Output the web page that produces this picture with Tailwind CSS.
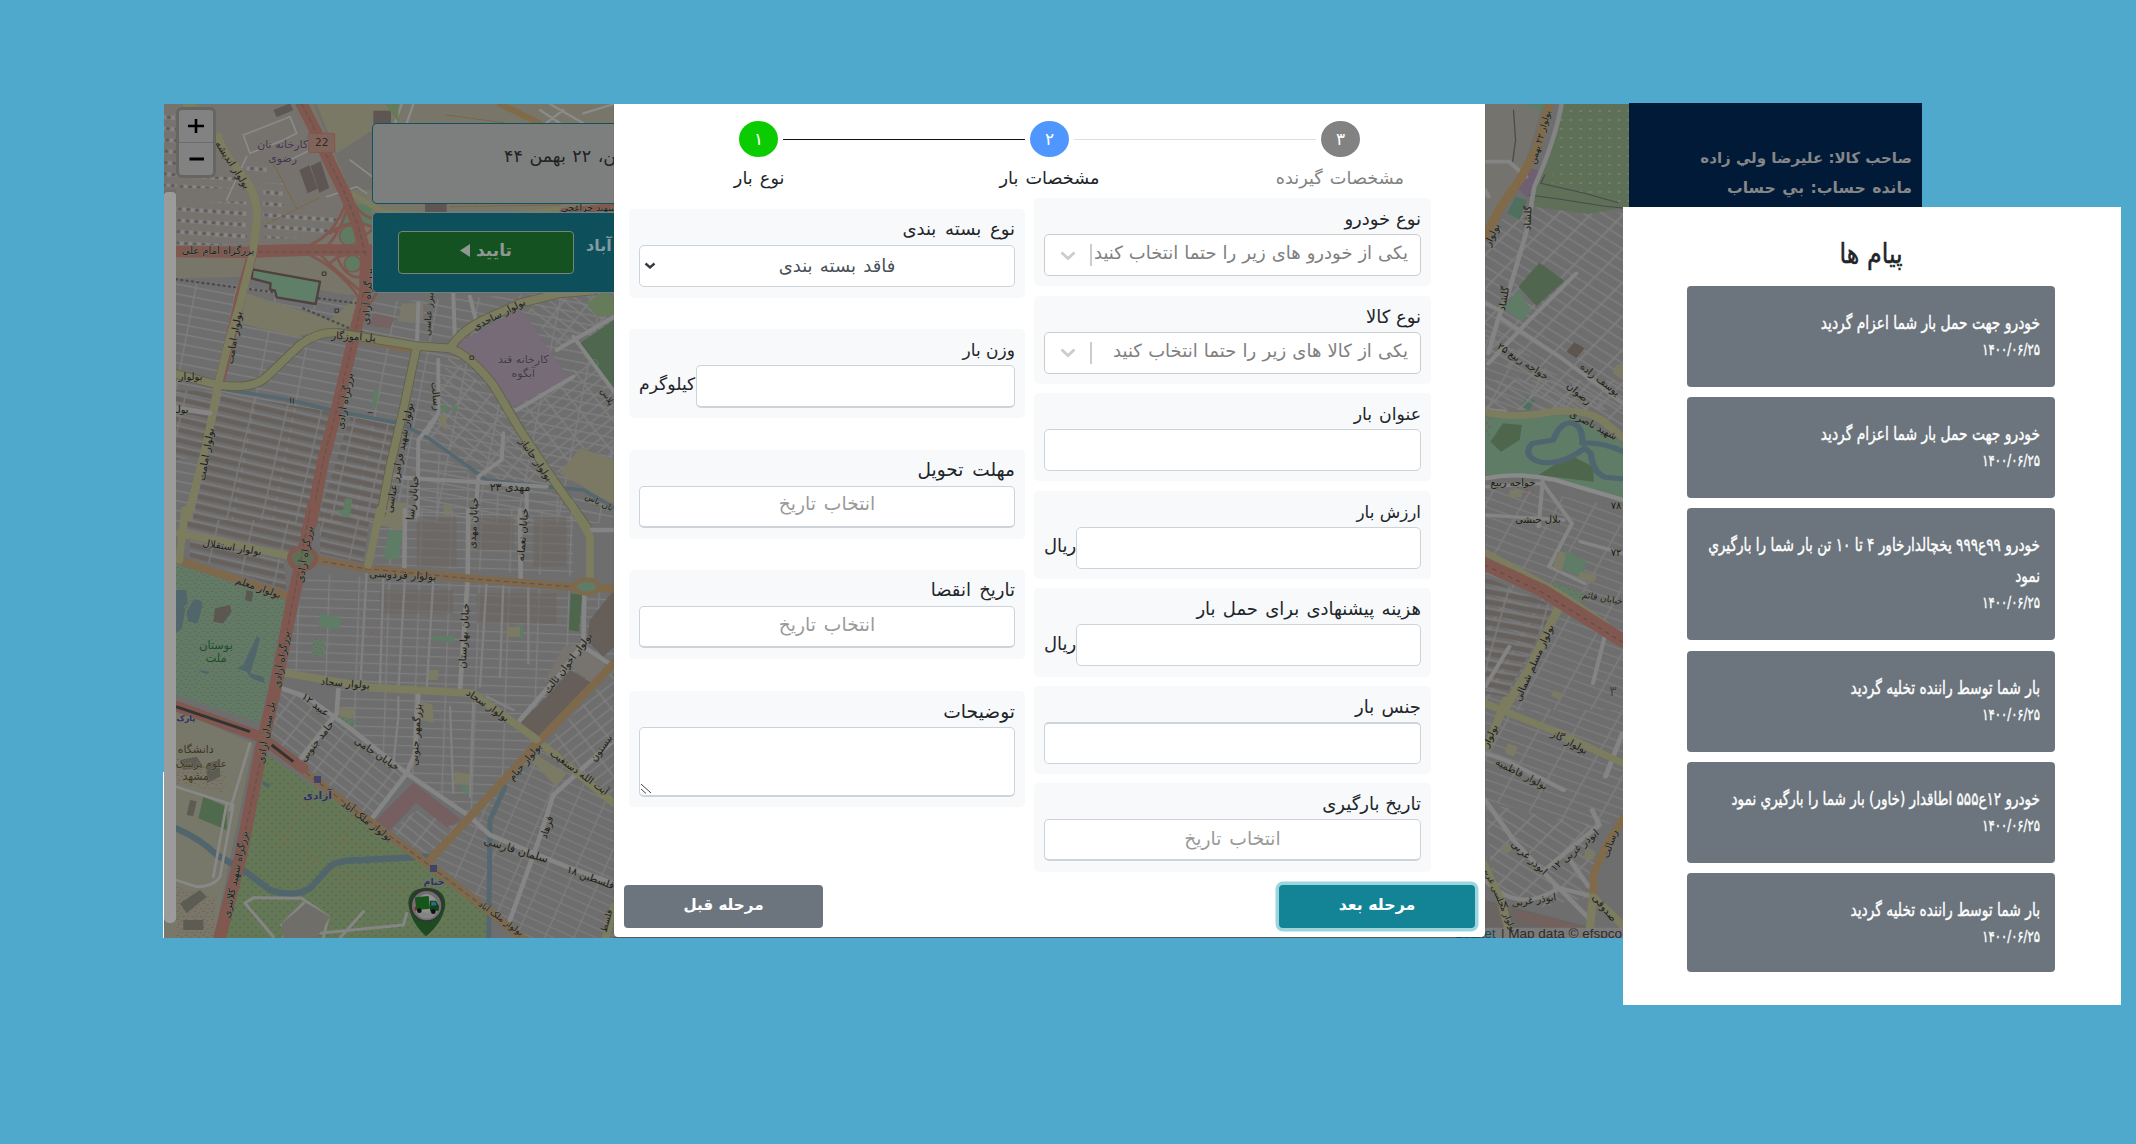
<!DOCTYPE html>
<html lang="fa">
<head>
<meta charset="utf-8">
<title>مشخصات بار</title>
<script src="https://cdn.jsdelivr.net/npm/@tailwindcss/browser@4"></script>
</head>
<body class="bg-[#4fa9cc] font-['DejaVu_Sans',sans-serif]">
<main class="relative w-[2136px] h-[1144px] overflow-hidden pt-[104px] pl-[164px]">

  <!-- application window -->
  <section class="relative flex w-[1758px] h-[834px]">
    <div class="relative w-[1465px] h-[834px] overflow-hidden bg-[#6e6e6e]">
      <svg class="absolute inset-0" width="1465" height="834" viewBox="164 104 1465 834" fill="none" stroke-linecap="round" stroke-linejoin="round">
        <defs>
          <pattern id="streets" width="120" height="29" patternUnits="userSpaceOnUse" patternTransform="rotate(11)"><path d="M0 5H120M8 0V29" stroke="#7e7e7e" stroke-width="4"/></pattern>
          <pattern id="dense" width="102" height="30" patternUnits="userSpaceOnUse" patternTransform="rotate(13)"><path d="M0 15H102" stroke="#67615e" stroke-width="15" stroke-dasharray="7 2"/><path d="M0 3H102M4 0V30" stroke="#7b7b7b" stroke-width="4"/></pattern>
          <pattern id="blocks" width="90" height="27" patternUnits="userSpaceOnUse" patternTransform="rotate(2)"><path d="M0 5H90M5 0V27" stroke="#7e7e7e" stroke-width="4"/></pattern>
          <pattern id="diag" width="62" height="27" patternUnits="userSpaceOnUse" patternTransform="rotate(38)"><path d="M0 4H62M4 0V27" stroke="#7e7e7e" stroke-width="4.500"/></pattern>
          <pattern id="diag2" width="60" height="28" patternUnits="userSpaceOnUse" patternTransform="rotate(-38)"><path d="M0 4H60M4 0V28" stroke="#7e7e7e" stroke-width="4.500"/></pattern>
          <pattern id="slope" width="80" height="26" patternUnits="userSpaceOnUse" patternTransform="rotate(24)"><path d="M0 4H80M4 0V26" stroke="#7c7c7c" stroke-width="4"/></pattern>
          <pattern id="trees" width="24" height="24" patternUnits="userSpaceOnUse"><path d="M4 5h3M16 17h3" stroke="#425c3d" stroke-width="2"/></pattern>
          <pattern id="flowers" width="26" height="24" patternUnits="userSpaceOnUse"><path d="M3 4h4M15 9h3M8 18h3M21 20h3" stroke="#7d5650" stroke-width="3"/></pattern>
          <pattern id="dots" width="23" height="27" patternUnits="userSpaceOnUse"><path d="M9 9h3" stroke="#7c8570" stroke-width="4"/></pattern>
          <pattern id="houses" width="52" height="34" patternUnits="userSpaceOnUse" patternTransform="rotate(4)"><path d="M0 10H52" stroke="#868686" stroke-width="12"/><path d="M4 10h12M30 10h12" stroke="#5f5c5a" stroke-width="10" stroke-linecap="butt"/></pattern>
        </defs>

        <!-- north west -->
        <g transform="translate(150 90) scale(.33333)">
          <path fill="url(#streets)" d="M78 560L620 640 1392 600V1300H78z"/>
          <path fill="url(#dense)" d="M190 905L540 965 480 1300H110zM600 980L750 1010 700 1300H500zM78 900L190 905 150 1100 78 1110z"/>
          <path fill="url(#blocks)" d="M830 1060L1000 1180 1200 1200 1290 1300H700z"/>
          <path fill="url(#diag)" d="M900 790L1020 910 1110 1020 1210 1190 1120 1190 1000 1160 820 1040zM1130 660L1392 560V700L1280 750 1230 780z"/>
          <path fill="url(#diag2)" d="M1100 955L1260 860 1310 790 1392 900V1100L1290 1075 1230 1150 1190 1140z"/>
          <path fill="#787569" d="M42 42H1392V380H700L660 620 560 610 300 560 78 565V300H42z"/>
          <path fill="#76736e" d="M42 42H450L590 300 600 370 480 470H78V300H42z"/>
          <path fill="#716f6b" d="M490 42H700V300H600z"/>
          <path fill="#797965" d="M500 42H750L700 100 560 190zM290 610L540 690 620 620 600 710 520 720 440 740 270 700z"/>
          <path fill="url(#houses)" d="M80 335H290V465H80zM340 280H400V410H340zM345 375H570V445H345zM90 260H300V295H90zM42 60H80V290H42zM290 225H350V260H290z"/>
          <path fill="#5d5652" d="M670 62h53v40h-53zM448 240l30-14 25 70-30 14zM482 228l30-14 26 80-30 14zM370 60l50-20 10 20-50 22zM825 340h65v28h-65z"/>
          <path d="M280 135L420 80 440 130 400 150 300 190zM420 210L500 170M230 330L290 200M530 320L620 290 650 310M600 210L640 240 720 300" stroke="#8a8a8a" stroke-width="5"/>
          <path d="M370 220L440 355M350 402L505 325M890 75L1060 98M900 350L1230 345" stroke="#7a6540" stroke-width="3" stroke-dasharray="14 4"/>
          <path d="M755 42L735 100M790 42L770 100M1170 60L1230 100M1200 42L1300 100M1392 42L1300 70M1240 60L1190 98" stroke="#8b8b8b" stroke-width="7"/>
          <path fill="#657b5a" d="M705 42h40v55zM1310 640l50-35 32 20v50l-50 5z"/>
          <path fill="#4e674e" d="M1282 765L1392 690V905z"/><circle cx="1333" cy="820" r="11" stroke="#60805f" stroke-width="3"/>
          <path d="M78 568L620 640" stroke="#4b4b4b" stroke-width="7" stroke-dasharray="3 13"/>
          <path d="M460 655L610 720" stroke="#4b4b4b" stroke-width="7" stroke-dasharray="3 13"/>
          <path fill="#5f7f68" stroke="#51403f" stroke-width="7" d="M308 538L510 575 497 642 380 622 375 602 360 598 362 580 305 565z"/>
          <path fill="#766b77" d="M920 765L1110 655 1255 862 1092 950 1030 870z"/>
          <path fill="#756263" d="M670 670l65 15-15 30-60-8z"/><path fill="#7a786a" d="M755 640h65v60l-75-5z"/>
          <path fill="#7b7864" d="M1228 1150L1290 1075 1392 1110V1250L1300 1190z"/>
          <path fill="#5f7c63" d="M672 898l15 2-8 55-15-4zM872 945h20v20h-20zM905 947h18v18h-18zM585 1225l22 2-8 55-22-5zM590 360l20 30-36 25zM610 340L665 345V410L620 400z"/>
          <path fill="#7b7a66" d="M710 1230l60 10-5 50h-60zM880 1245h25v40h-25zM870 975h20v50l-25-30z"/>
          <path d="M210 895L420 930 540 960 750 1000 830 1040 900 1090 1010 1170 1190 1190 1300 1200 1392 1252" stroke="#55676f" stroke-width="11"/>
          <path d="M865 810L865 970 805 1050 803 1290M865 970L830 1030M910 610L915 760M960 620L980 700M1060 1030L1055 1110 985 1160 975 1290M720 1160L1190 1190M800 790L805 640M1130 1200V1290M1220 780L1392 680M1270 740L1392 905M1392 440V560M1100 960L1270 860" stroke="#858585" stroke-width="12"/>
          <path d="M600 310L700 365 950 385 1392 345" stroke="#7c7d5e" stroke-width="16"/>
          <path d="M1392 350L1240 365" stroke="#80584f" stroke-width="22"/>
          <path d="M1050 42L1170 100" stroke="#806a48" stroke-width="18"/>
          <path d="M625 740L800 775" stroke="#806a4f" stroke-width="34"/>
          <path d="M300 470L480 465Q560 430 590 330M480 495Q570 540 625 620M500 480Q530 520 640 610M530 470Q570 430 600 330M540 430Q600 380 665 410M540 520Q590 470 640 520M560 500Q590 570 635 560M665 420Q600 470 665 500M610 340Q640 380 665 385M680 610L640 670" stroke="#80584f" stroke-width="8"/>
          <circle cx="597" cy="437" r="29" fill="#5f7c63" stroke="#80584f" stroke-width="5"/><circle cx="608" cy="521" r="25" fill="#5f7c63" stroke="#80584f" stroke-width="5"/>
          <path d="M455 42L500 130 540 220 585 310 625 410 648 500 645 610 622 700 600 790 560 960 520 1110 483 1300" stroke="#80584f" stroke-width="36"/>
          <path d="M78 485L300 487 480 480 665 480" stroke="#80584f" stroke-width="34"/>
          <path d="M455 42L500 130 540 220 585 310 625 410 648 500M640 610L622 700 600 790 560 960 520 1110 483 1300M325 486H660" stroke="#675250" stroke-width="4" stroke-dasharray="12 12"/>
          <path d="M210 870Q240 760 270 620L310 480" stroke="#80584f" stroke-width="30"/>
          <path stroke="#5f6047" stroke-width="28" d="M78 852L205 885Q310 900 350 860L450 765Q500 725 560 728L800 768 900 775Q960 795 1030 885L1110 1020 1210 1170 1310 1310M800 770L760 960 720 1130 688 1300M900 775Q930 725 1000 690L1110 640 1230 610 1330 602"/>
          <path stroke="#7c7d5e" stroke-width="23" d="M78 852L205 885Q310 900 350 860L450 765Q500 725 560 728L800 768 900 775Q960 795 1030 885L1110 1020 1210 1170 1310 1310M800 770L760 960 720 1130 688 1300M900 775Q930 725 1000 690L1110 640 1230 610 1330 602M205 140Q220 190 250 220L300 290Q330 350 317 420L308 490 270 640 235 760 205 880 170 1060 108 1300M110 42L150 62"/>
          <path d="M78 955L180 970" stroke="#858585" stroke-width="15"/>
          <rect x="476" y="130" width="78" height="57" rx="4" fill="#7e655c" stroke="#8a5349" stroke-width="3"/>
          <path d="M422 924v14M430 926v14M655 968h12M518 546h10v10h-10zM556 657h10v10h-10zM961 798h10v10h-10z" stroke="#333" stroke-width="3"/>
        </g>

        <!-- south west -->
        <g transform="translate(150 510) scale(.33333)">
          <path fill="url(#blocks)" d="M470 190L1392 250V460L1170 690 960 540 660 530 400 480zM560 530L960 560 1160 700 960 920 600 660z"/>
          <path fill="url(#dense)" d="M110 30H480L430 130 110 70zM120 90L400 150 410 240 120 140zM510 20H660L640 160 510 130z"/>
          <path fill="url(#blocks)" d="M690 0H1270V200L640 160z"/>
          <path fill="#6b6561" opacity=".55" d="M800 20h120v150H800zM980 20h110v100h-110zM1150 20h100v150h-100zM690 240h220v70H690zM980 250h240v90H980z"/>
          <path fill="url(#diag)" d="M380 540L470 560 770 790 650 930 360 690zM720 960L830 880 930 950 830 1040z"/>
          <path fill="url(#slope)" d="M1080 800L1170 710 1392 890V1290H1140L850 1050 960 930z"/>
          <path fill="url(#diag2)" d="M1190 700L1392 480V860z"/>
          <path fill="#5f7c67" d="M78 160L410 272 330 640 78 555z"/><path fill="url(#flowers)" d="M78 160L410 272 330 640 78 555z"/>
          <path fill="#78786a" d="M78 600L310 700 270 900 190 1290H42V1240L78 1220z"/>
          <path fill="url(#flowers)" d="M78 740L230 790 220 850 78 820zM78 1130L200 1160 190 1284H78z"/>
          <path fill="#5d5c52" d="M90 750l50-10 20 30-60 10zM170 760l40-10v50l-40 20zM90 1180l60-40 20 20-60 50zM100 1230h60v30h-60zM120 870l20 4-10 45-20-4z"/>
          <path fill="#4f6a4c" d="M160 860L230 890V960L145 925z"/>
          <path fill="#647757" d="M345 730L830 1060 1010 1200 1015 1290H225L300 960z"/><path fill="url(#trees)" d="M345 730L830 1060 1010 1200 1015 1290H225L300 960z"/>
          <path d="M400 800L560 990 760 1040M330 930L700 1200M560 990L420 1120M500 860L460 900 360 1040M620 910L540 1080 800 1150" stroke="#7c6c45" stroke-width="3" stroke-dasharray="20 9"/>
          <path fill="#50666b" d="M78 240h30l5 40-20 20-15-5zM130 270q25-5 28 15l-15 55-28-5-5-30zM78 290l28 5-10 60-18 15zM320 380l10 5-15 60-15 45 40 10 5 20-40-15-15-20-30-10 20-10zM140 480l40 5-10 8zM340 812l22 12-8 10-18-12z"/>
          <path fill="#5d5752" d="M195 295l45-10 5 20-25 35-30-5zM290 240l20 5-5 30-20-4z"/>
          <path fill="#5f7c67" d="M715 60L760 65 745 150 702 145zM490 385l38 8-8 50-35-8zM560 610l55 20-10 40-45-30zM510 310l65 14-10 35-60-10zM850 378h65l-4 20-65-7zM1100 345h20v40h-20zM930 830l30-5-5 25-20-5zM555 0h50l-20 20z"/>
          <path fill="url(#flowers)" d="M490 385l38 8-8 50-35-8zM560 610l55 20-10 40-45-30zM655 365h50v15h-50z"/>
          <path fill="#4e674c" d="M1262 250l35 5-10 110-30-5z"/>
          <path fill="#7b7a64" d="M715 0h55l-15 60-65-15zM570 590l45 8-8 30-40-10zM830 480h35v30h-35zM812 575l35 8 5 55-40-8zM1140 750L1160 735 1250 790 1220 830zM915 785l45 8-4 32-44-6zM1070 350h40v30h-40z"/>
          <path fill="#655e59" d="M1110 640L1200 550 1260 480 1335 525 1170 685zM1320 330L1392 240V410L1360 440 1310 390z"/>
          <path fill="#77736e" d="M1180 520L1240 410 1300 400 1370 470 1330 520 1260 470z"/>
          <path fill="#755f61" d="M678 930L790 818 935 930 890 952 798 878 716 965z"/>
          <path d="M1065 830L1020 930 1016 1290" stroke="#55676f" stroke-width="15"/>
          <path d="M78 955Q150 985 200 1035L280 1080 360 1140Q430 1165 480 1135L540 1070Q560 1050 640 1050L830 1040" stroke="#51656c" stroke-width="19"/>
          <path d="M78 830L250 885 210 1100Q190 1130 140 1130L78 1110M230 880L190 1100M300 700L240 900" stroke="#888" stroke-width="8"/>
          <path d="M285 1180L310 1163 455 1165 535 1220 520 1284M285 1180L370 1280M395 1245L460 1180M640 1205L570 1284M400 1280L760 1245 770 1210" stroke="#858585" stroke-width="9"/>
          <path fill="#706e68" d="M470 1180L540 1220 500 1284H400L395 1240z"/>
          <path d="M380 530L470 560 600 655 770 790 960 920 1020 975 1250 1070 1392 1120M1303 250L1300 400 1240 480 1110 630M670 920L770 790 795 730 805 550M955 0L953 210 930 540M765 0L763 180M1110 0L1112 220M565 540L560 610 450 750M1392 690L1210 855 1170 980 1080 1230M1320 60H1392M1300 410L1392 470" stroke="#858585" stroke-width="14"/>
          <path d="M650 190L630 540M745 560V620L730 760M1010 560L1090 600M765 200L745 540M700 200L690 520M850 210L830 540M1010 215L990 530M1060 220L1050 500M900 590L910 850M970 570L960 860M1135 230V460" stroke="#808080" stroke-width="7"/>
          <path stroke-width="24" stroke="#7f694c" d="M78 148L410 258M500 148L640 175 950 205 1260 230 1392 236M355 690L470 790 600 890 830 1060 1000 1190 1130 1295M835 1055L960 920 1080 790 1170 690 1392 460"/>
          <path d="M520 155L640 175 950 205 1260 230M470 790L600 890 830 1060 1000 1190" stroke="#5d5658" stroke-width="4" stroke-dasharray="12 14"/>
          <path stroke="#7c7d5e" stroke-width="23" d="M105 0L88 150M88 70L430 140M655 165L690 0M410 490L660 532 970 550 1160 688M1185 710L1392 880M1262 -20L1320 80V200M1365 1290L1392 1190"/>
          <path d="M490 -10L458 140 430 260 375 540 335 710 272 1040 205 1300" stroke="#80584f" stroke-width="38"/>
          <path d="M78 588L330 680 460 775" stroke="#80584f" stroke-width="32"/><path d="M78 590L300 665M365 705L430 755" stroke="#333" stroke-width="9" stroke-linecap="butt"/>
          <ellipse cx="458" cy="145" rx="40" ry="32" fill="#5f6f55" stroke="#80584f" stroke-width="14"/>
          <path d="M480 0L435 240 385 500M330 760L260 1080" stroke="#675250" stroke-width="4" stroke-dasharray="12 12"/>
          <ellipse cx="1310" cy="230" rx="36" ry="21" fill="#5f7c67" stroke="#7f694c" stroke-width="13"/>
          <path fill="#41436b" d="M492 798h21v21h-21zM840 1065h21v21h-21z"/>
        </g>

        <!-- map labels, west -->
        <g transform="translate(150 90) scale(.33333)" font-family="DejaVu Sans" font-size="30" text-anchor="middle" fill="#1d1d1d" stroke="#77776a" stroke-width="3" paint-order="stroke">
          <g fill="#47334a" stroke="#777" font-size="33"><text x="398" y="174">کارخانه نان</text><text x="398" y="216">رضوی</text><text x="1120" y="820">کارخانه قند</text><text x="1120" y="861">آبگوه</text></g>
          <text x="515" y="168" font-size="32" fill="#3b2420" stroke="none">22</text>
          <text x="204" y="492">بزرگراه امام علی</text>
          <text transform="translate(240 230) rotate(57)">بولوار اندیشه</text>
          <text transform="translate(262 745) rotate(-80)">بولوار امامت</text>
          <text transform="translate(178 1095) rotate(-80)">بولوار امامت</text>
          <text transform="translate(662 620) rotate(-86)">بزرگراه آزادی</text>
          <text transform="translate(594 935) rotate(-80)">بزرگراه آزادی</text>
          <text x="610" y="750" transform="rotate(3 610 750)">پل آموزگار</text>
          <text transform="translate(1052 682) rotate(-27)">بولوار ساجدی</text>
          <text transform="translate(845 670) rotate(-86)" font-size="27">میرز عباسی</text>
          <text transform="translate(848 920) rotate(84)">رسالت</text>
          <text transform="translate(758 1105) rotate(-79)">بولوار شهید فرامرز عباسی</text>
          <text transform="translate(1150 1115) rotate(55)">بولوار جانباز</text>
          <text x="1080" y="1204" font-size="33">مهدی ۲۳</text>
          <text transform="translate(798 1225) rotate(-83)">خیابان رسا</text>
          <text x="122" y="870">بولوار</text><text x="95" y="970">بولـ</text>
          <text transform="translate(1365 925) rotate(60)" font-size="26">پلاس</text><text transform="translate(1344 1244) rotate(25)" font-size="26">بان یاس</text><text x="1315" y="363" font-size="28">شهید چراغچی</text>
        </g>
        <g transform="translate(150 510) scale(.33333)" font-family="DejaVu Sans" font-size="30" text-anchor="middle" fill="#1d1d1d" stroke="#77776a" stroke-width="3" paint-order="stroke">
          <text transform="translate(245 122) rotate(9)">بولوار استقلال</text>
          <text transform="translate(322 242) rotate(19)">بولوار معلم</text>
          <text transform="translate(474 135) rotate(-80)">بزرگراه آزادی</text>
          <text transform="translate(404 450) rotate(-80)">بزرگراه آزادی</text>
          <text transform="translate(358 670) rotate(-80)">پل میدان آزادی</text>
          <text transform="translate(266 1095) rotate(-78)">بزرگراه شهید کلانتری</text>
          <text transform="translate(758 206) rotate(3)" font-size="32">بولوار فردوسی</text>
          <text transform="translate(585 530) rotate(5)">بولوار سجاد</text>
          <text transform="translate(1008 595) rotate(34)">بولوار سجاد</text>
          <text transform="translate(952 378) rotate(-87)">خیابان بهارستان</text>
          <text transform="translate(980 40) rotate(-87)">خیابان مهدی</text><text transform="translate(1128 75) rotate(-85)">خیابان نعمانه</text>
          <text transform="translate(808 675) rotate(-86)">بزرگمهر جنوبی</text>
          <text transform="translate(675 740) rotate(34)">خیابان جامی</text>
          <text transform="translate(490 592) rotate(38)">عبید ۱۲</text>
          <text transform="translate(508 700) rotate(-52)">حامد جنوبی</text>
          <text transform="translate(645 940) rotate(37)">بولوار ملک آباد</text>
          <text transform="translate(1048 1232) rotate(36)" font-size="26">بولوار ملک آباد</text>
          <text transform="translate(1132 762) rotate(-50)">بولوار خیام</text>
          <text transform="translate(1262 465) rotate(-53)">بولوار اخوان ثالث</text>
          <text transform="translate(1282 795) rotate(36)">آیت الله دستغیب</text>
          <text transform="translate(1095 1030) rotate(17)" font-size="33">سلمان فارسی</text>
          <text transform="translate(1318 1112) rotate(20)">فلسطین ۱۸</text>
          <text transform="translate(1200 955) rotate(-72)">فرهاد</text><text transform="translate(1362 720) rotate(-55)">بیستون</text>
          <text transform="translate(1378 1235) rotate(-75)" font-size="26">فلسط</text>
          <g fill="#1f4a26" stroke="#5f7c67" font-size="34"><text x="198" y="418">بوستان</text><text x="198" y="455">ملت</text></g>
          <g fill="#3d3722" stroke="#78786a" font-size="33"><text x="137" y="730">دانشگاه</text><text x="154" y="770" font-size="31">علوم پزشک</text><text x="137" y="810">مشهد</text></g>
          <g fill="#2c2f66" font-size="32" font-weight="bold"><text x="108" y="634" font-size="24">پارک</text><text x="503" y="868">آزادی</text><text x="852" y="1126" font-size="28">خیام</text></g>
          <!-- truck pin -->
          <g stroke="none">
            <path fill="#1d4a20" d="M775 1180Q775 1135 830 1133 886 1135 886 1185 880 1235 828 1279 780 1235 775 1180z"/>
            <circle cx="830" cy="1185" r="50" fill="#333"/><circle cx="830" cy="1187" r="44" fill="#6f6f6f"/><circle cx="830" cy="1190" r="36" fill="#858585"/><circle cx="830" cy="1180" r="28" fill="#909090"/>
            <path fill="#15561a" d="M795 1162L836 1158 840 1196 798 1200z"/><path fill="#124316" d="M840 1172L858 1172 867 1188 866 1202 840 1204z"/><path fill="#2d6c8d" d="M844 1175L856 1175 860 1186 844 1187z"/>
            <path fill="#8a2a20" d="M794 1190h5v12h-5z"/><circle cx="808" cy="1202" r="7" fill="#111"/><circle cx="850" cy="1205" r="7" fill="#111"/>
          </g>
        </g>

        <!-- east strip -->
        <g transform="translate(1480 90) scale(.41837 .33333)">
          <path fill="#6e6e6e" d="M12 42H356V960H12z"/><path fill="url(#diag)" d="M100 340L356 370V960H180L12 780V430z"/><path fill="url(#slope)" d="M12 700L190 860 342 960H12z"/>
          <path fill="#75736d" d="M12 42H150L100 250 12 430z"/>
          <path fill="#5f7058" d="M190 42H356V350L260 372 130 350 125 290 165 200z"/><path fill="url(#dots)" d="M195 50H356V350L170 280z"/>
          <path fill="#5f7c67" d="M105 42h45v25z"/><path fill="#50705f" d="M85 320L112 330 95 390 65 370z"/><path fill="#6e6070" d="M110 235L140 240 115 325 85 290z"/>
          <path d="M80 60L85 150 78 215M155 255L145 280 250 310 330 338M118 315L192 328 295 348 356 356" stroke="#4a4a4a" stroke-width="3"/>
          <path d="M12 215L70 215 110 260M20 320L12 300M195 42Q180 150 130 290L110 430 70 600 45 680 20 790M230 550L110 700M45 680L190 800 342 940M45 660L12 640M110 700L20 820" stroke="#848484" stroke-width="11"/>
          <path fill="#50664f" d="M142 518L202 572 135 648 92 590z"/><path fill="#5f7c67" d="M95 600L120 660 100 695 55 655z"/><path fill="#5d5550" d="M225 757L250 775 230 805 207 785z"/><path fill="#7b7a64" d="M325 825L342 820V870L318 850z"/><path fill="#50705f" d="M110 920l22 12-15 30-20-10z"/>
          <path d="M166 42L135 180 95 270 50 350 8 450" stroke="#806a48" stroke-width="22" stroke-linecap="butt"/>
          <path stroke="#848484" stroke-width="12" d="M12 960L60 965"/>
        </g>
        <g transform="translate(1480 380) scale(.41837 .33333)">
          <path fill="url(#diag)" d="M12 0H342V180L290 120 230 90 12 90z"/><path fill="url(#slope)" d="M12 310L342 380V990H12z"/>
          <path fill="url(#dense)" d="M12 590L180 680 60 950 12 940z"/>
          <path fill="#5f7c67" d="M12 110L230 105 342 190V370L200 305 12 285z"/><path fill="url(#flowers)" d="M12 115h15v50H12z"/><path fill="#4e674c" d="M55 130L100 135 95 180 50 215 25 185zM215 225L270 260 272 305 140 285z"/>
          <path d="M12 295Q90 275 180 300L342 360" stroke="#8a8a8a" stroke-width="13"/>
          <path d="M342 297L300 292Q270 280 265 220L250 205Q190 260 140 245 100 225 125 190L175 180Q190 130 215 128 245 130 245 190 290 185 342 215" stroke="#4f6570" stroke-width="15"/>
          <path d="M12 320L150 310 220 430 165 560 250 610M12 405L200 420M240 485L342 520M150 300L140 440M300 760L270 910M12 920L70 800" stroke="#848484" stroke-width="10"/>
          <path fill="#5f7c67" d="M205 510L255 545 245 590 200 570zM170 605L250 640 240 670 200 665z"/><path fill="#7b7a64" d="M185 515L205 525 195 575 175 560zM70 330h30v22H70zM175 930l25 12-8 18-22-12zM240 575l40 10-8 22-38-10z"/><path fill="url(#flowers)" d="M170 605L250 640 240 670 200 665zM105 320h25v32h-25z"/>
          <path d="M8 95Q80 115 150 100 240 80 290 120L345 175M8 515L190 640 300 735M185 690L120 860 58 990M8 968L58 995" stroke="#7c7d5e" stroke-width="21"/>
          <path d="M5 548L150 632 345 785" stroke="#80584f" stroke-width="38"/><path d="M12 555L150 638 342 788" stroke="#5f4a47" stroke-width="3" stroke-dasharray="8 14"/>
        </g>
        <g transform="translate(1480 700) scale(.41837 .33333)">
          <path fill="#6e6e6e" d="M12 30H342V714H12z"/><path fill="url(#slope)" d="M12 30H342V350L280 390 12 300z"/><path fill="url(#diag)" d="M12 310L280 380 268 590 150 620 30 560z"/>
          <path fill="#6a6562" d="M12 600L260 680V714H12z"/><path fill="#73615e" d="M90 630L250 680 240 705 90 660z"/>
          <path fill="#7b7a64" d="M65 130L90 140 80 170 60 160zM60 430L78 445 65 462 50 450zM250 450h22v28h-22z"/>
          <path d="M12 160L60 180 200 270M12 300L80 420 150 515 260 655M150 515L285 375M285 375L268 330M12 540Q90 640 180 570M340 100L300 230M215 480L260 560M180 560L268 590" stroke="#848484" stroke-width="12"/>
          <path d="M345 350L300 440 272 520 270 595" stroke="#806a48" stroke-width="18"/>
          <path d="M8 8L190 100 345 192M62 0L18 140M8 490L50 600 75 720M270 590L260 720M270 590L345 680" stroke="#7c7d5e" stroke-width="20"/>
          <path fill="#7e7e7e" fill-opacity=".85" d="M-80 683H356V720H-80z"/>
        </g>
        <g font-family="DejaVu Sans" font-size="10" text-anchor="middle" fill="#1d1d1d" stroke="#77776a" stroke-width="1" paint-order="stroke">
          <text transform="translate(1543 138) rotate(-74)" font-size="9">بولوار ۲۲ بهمن</text><text transform="translate(1495 236) rotate(-65)">بولوار</text><text transform="translate(1531 218) rotate(-88)">گلشاد</text><text transform="translate(1507 299) rotate(-80)">گلشاد</text>
          <text transform="translate(1521 364) rotate(33)">خواجه ربیع ۲۵</text><text transform="translate(1577 396) rotate(40)">رضوان</text><text transform="translate(1598 382) rotate(38)">یوسف زاده</text>
          <text transform="translate(1592 428) rotate(28)">شهید ناصری</text><text x="1513" y="486">خواجه ربیع</text><text x="1538" y="523">بلال حبشی</text><text x="1616" y="509">۷۸</text><text x="1616" y="556">۷۲</text><text transform="translate(1602 601) rotate(10)" font-size="9">خیابان قائم</text>
          <text transform="translate(1537 664) rotate(-66)">بولوار مسلم شمالی</text><text x="1613" y="696" font-size="14" fill="#444">۳</text>
          <text transform="translate(1568 745) rotate(28)">بولوار گاز</text><text transform="translate(1520 777) rotate(27)">بولوار فاطمیه</text><text transform="translate(1493 737) rotate(-65)">بولوار</text>
          <text transform="translate(1527 860) rotate(43)">ابوذر غربی</text><text transform="translate(1577 853) rotate(-40)">ابوذر غربی ۱۲</text><text transform="translate(1530 904) rotate(-8)">ابوذر غربی ۸</text><text transform="translate(1497 900) rotate(66)" font-size="8.500">بولوار مجلسی غربی</text><text transform="translate(1602 910) rotate(50)">صدوقی</text><text transform="translate(1613 845) rotate(-72)">رسالت</text>
        </g>
        <path d="M614 937.5H1485" stroke="#5d5a52" stroke-width="1"/>
        <g font-family="Liberation Sans" font-size="13.500"><text x="1455" y="937.500" fill="#0c4a5c">Leaflet</text><text x="1501" y="937.500" fill="#2c2c2c" textLength="121" lengthAdjust="spacingAndGlyphs">| Map data © efspco</text></g>
      </svg>

      <!-- page scrollbar -->
      <div class="absolute left-0 top-[88px] w-3 h-[731px] rounded-t-[4px] rounded-b-[5px] bg-[#9b9b9b]"></div>

      <!-- zoom control -->
      <div class="absolute left-[12px] top-[3px] flex flex-col w-10 h-[71px] rounded-md border-[3px] border-[#666562] bg-[#828282]">
        <div class="flex-1 flex items-center justify-center border-b border-[#6c6c6c]"><svg width="16" height="16" stroke="#000" stroke-width="2.600"><path d="M0 8H16M8 1V15"/></svg></div>
        <div class="flex-1 flex items-center justify-center"><svg width="16" height="16" stroke="#000" stroke-width="3"><path d="M1.500 8H16"/></svg></div>
      </div>

      <!-- address cards -->
      <div class="absolute left-[208px] top-[19px] flex flex-col gap-[8px] w-[300px]">
        <div dir="ltr" class="h-[81px] rounded-[5px] border border-[#10525e] bg-[#7d7f7e] pl-[131px] pt-[18px] text-[17.500px] leading-[28px] text-[#202225] whitespace-nowrap [word-spacing:1px]"><span dir="rtl" class="inline-block">گلشن، ۲۲ بهمن ۴۴</span></div>
        <div class="flex items-start h-[81px] rounded-[5px] border border-[#747e80] bg-[#0d4f5b] pl-[25px] pt-[18px]">
          <div class="flex items-center justify-center gap-1.5 w-[176px] h-[43px] rounded-[4px] border border-[#76857a] bg-[#155221] text-[#8f9891] pb-1">
            <svg width="10" height="13" fill="currentColor"><path d="M0 6.500L10 0V13z"/></svg><span class="text-[17px] font-bold">تایید</span>
          </div>
          <span dir="rtl" class="ml-[12px] mt-[3px] text-[16px] leading-6 font-bold text-[#819ca1]">آباد</span>
        </div>
      </div>

      <!-- cargo form dialog -->
      <div class="absolute left-[450px] top-0 flex flex-col w-[871px] h-[833px] rounded-b-[4px] bg-white text-[#212529] shadow-[0_0_1px_#444]">
        <div class="flex items-center px-[125px] pt-[17px] text-[17px] text-white">
          <div class="flex items-center justify-center w-[39px] h-9 rounded-[50%] bg-[#0acc00] pt-0.5">۱</div>
          <div class="flex-1 mx-[5px] h-px bg-[#111]"></div>
          <div class="flex items-center justify-center w-[39px] h-9 rounded-[50%] bg-[#4f96ff] pt-0.5">۲</div>
          <div class="flex-1 mx-[5px] h-px bg-[#dedede]"></div>
          <div class="flex items-center justify-center w-[39px] h-9 rounded-[50%] bg-[#828282] pt-0.5">۳</div>
        </div>
        <div class="grid grid-cols-3 pt-[7px] text-[17.700px] leading-[28px] text-center [word-spacing:1.500px]">
          <span>نوع بار</span><span>مشخصات بار</span><span class="text-[#828282]">مشخصات گیرنده</span>
        </div>

        <div class="flex gap-[9px] pl-[15px] pt-[6px] text-[18px] [word-spacing:1.500px]">
          <div class="flex flex-col gap-[31.800px] w-[396px] pt-[11px]" dir="rtl">
            <div class="h-[88.700px] rounded-[5px] bg-[#f8f9fb] px-[10px] pt-[7px]">
              <div class="h-[29px] leading-[26px] [word-spacing:3px]">نوع بسته بندی</div>
              <div class="flex items-center h-[42px] rounded-[5px] border border-[#cdd3d9] bg-white pl-[4px] text-[#495057]"><span class="flex-1 pb-0.5 text-center pl-3 pr-2">فاقد بسته بندی</span><svg width="12" height="8" fill="none" stroke="#343a40" stroke-width="2.400"><path d="M1.500 1.500L6 5.500 10.500 1.500"/></svg></div>
            </div>
            <div class="h-[88.700px] rounded-[5px] bg-[#f8f9fb] px-[10px] pt-[7px]">
              <div class="h-[29px] leading-[28px] text-[17px] [word-spacing:0px]">وزن بار</div>
              <div class="flex items-center"><div class="w-[319px] h-[43px] rounded-[5px] border border-b-2 border-[#cdd3d9] bg-white"></div><span class="flex-1 pb-1 text-left text-[17.200px] whitespace-nowrap">کیلوگرم</span></div>
            </div>
            <div class="h-[88.700px] rounded-[5px] bg-[#f8f9fb] px-[10px] pt-[7px]">
              <div class="h-[29px] leading-[26px] text-[18.500px] [word-spacing:3px]">مهلت تحویل</div>
              <div class="flex items-center justify-center h-[42px] rounded-[5px] border border-b-2 border-[#cdd3d9] bg-white pb-1 text-[18.700px] text-[#999] [word-spacing:2px]">انتخاب تاریخ</div>
            </div>
            <div class="h-[88.700px] rounded-[5px] bg-[#f8f9fb] px-[10px] pt-[7px]">
              <div class="h-[29px] leading-[26px] [word-spacing:2.500px]">تاریخ انقضا</div>
              <div class="flex items-center justify-center h-[42px] rounded-[5px] border border-b-2 border-[#cdd3d9] bg-white pb-1 text-[18.700px] text-[#999] [word-spacing:2px]">انتخاب تاریخ</div>
            </div>
            <div class="h-[116px] rounded-[5px] bg-[#f8f9fb] px-[10px] pt-[7px]">
              <div class="h-[29px] leading-[27px] text-[18.700px]">توضیحات</div>
              <div class="flex items-end justify-end h-[70px] rounded-[5px] border border-b-2 border-[#cdd3d9] bg-white pl-[1px] pb-[1px]"><svg width="10" height="10" stroke="#444" stroke-width="1"><path d="M0 0L10 9M0 5L5 9.500"/></svg></div>
            </div>
          </div>

          <div class="flex flex-col gap-[9.400px] w-[397px]" dir="rtl">
            <div class="h-[88.200px] rounded-[5px] bg-[#f8f9fb] px-[10px] pt-[7px]">
              <div class="h-[29px] leading-[27px] [word-spacing:0px]">نوع خودرو</div>
              <div class="flex items-center h-[42px] rounded-[5px] border border-[#ccc] bg-white pr-[12px] pl-[15px]"><span class="flex-1 pb-[5px] text-[#808080] whitespace-nowrap [word-spacing:.2px]">یکی از خودرو های زیر را حتما انتخاب کنید</span><span class="w-[2px] h-[22px] bg-[#ccc]"></span><svg class="mr-[14px]" width="16" height="9" fill="none" stroke="#ccc" stroke-width="2.800"><path d="M1.500 1.500L8 7.500 14.500 1.500"/></svg></div>
            </div>
            <div class="h-[88.200px] rounded-[5px] bg-[#f8f9fb] px-[10px] pt-[7px]">
              <div class="h-[29px] leading-[27px] [word-spacing:0px]">نوع کالا</div>
              <div class="flex items-center h-[42px] rounded-[5px] border border-[#ccc] bg-white pr-[12px] pl-[15px]"><span class="flex-1 pb-[5px] text-[#808080] whitespace-nowrap [word-spacing:.5px]">یکی از کالا های زیر را حتما انتخاب کنید</span><span class="w-[2px] h-[22px] bg-[#ccc]"></span><svg class="mr-[14px]" width="16" height="9" fill="none" stroke="#ccc" stroke-width="2.800"><path d="M1.500 1.500L8 7.500 14.500 1.500"/></svg></div>
            </div>
            <div class="h-[88.200px] rounded-[5px] bg-[#f8f9fb] px-[10px] pt-[7px]">
              <div class="h-[29px] leading-[28px] text-[17.300px]">عنوان بار</div>
              <div class="h-[42px] rounded-[5px] border border-[#cdd3d9] bg-white"></div>
            </div>
            <div class="h-[88.200px] rounded-[5px] bg-[#f8f9fb] px-[10px] pt-[7px]">
              <div class="h-[29px] leading-[28px] text-[16.800px] [word-spacing:0px]">ارزش بار</div>
              <div class="flex items-center"><div class="w-[345px] h-[42px] rounded-[5px] border border-[#cdd3d9] bg-white"></div><span class="flex-1 pb-1 text-left whitespace-nowrap">ریال</span></div>
            </div>
            <div class="h-[88.200px] rounded-[5px] bg-[#f8f9fb] px-[10px] pt-[7px]">
              <div class="h-[29px] leading-[28px]">هزینه پیشنهادی برای حمل بار</div>
              <div class="flex items-center"><div class="w-[345px] h-[42px] rounded-[5px] border border-[#cdd3d9] bg-white"></div><span class="flex-1 pb-1 text-left whitespace-nowrap">ریال</span></div>
            </div>
            <div class="h-[88.200px] rounded-[5px] bg-[#f8f9fb] px-[10px] pt-[7px]">
              <div class="h-[29px] leading-[28px]">جنس بار</div>
              <div class="h-[42px] rounded-[5px] border border-t-2 border-[#cdd3d9] bg-white"></div>
            </div>
            <div class="h-[88.200px] rounded-[5px] bg-[#f8f9fb] px-[10px] pt-[7px]">
              <div class="h-[29px] leading-[28px] [word-spacing:0px]">تاریخ بارگیری</div>
              <div class="flex items-center justify-center h-[42px] rounded-[5px] border border-b-2 border-[#cdd3d9] bg-white pb-0.5 text-[18.700px] text-[#999] [word-spacing:2px]">انتخاب تاریخ</div>
            </div>
          </div>
        </div>

        <div class="mt-auto flex justify-between px-[10px] pb-[9px] text-white font-bold">
          <button class="w-[199px] h-[43px] rounded-[4px] bg-[#6c757d] pb-[3px] text-[15.200px]">مرحله قبل</button>
          <button class="w-[196px] h-[43px] rounded-[4px] bg-[#138496] pb-[3px] text-[15.800px] ring-[3.500px] ring-[#9bd6df]">مرحله بعد</button>
        </div>
      </div>
    </div>

    <!-- account sidebar -->
    <aside dir="rtl" class="-mt-px w-[293px] h-[835px] bg-[#001a38] pt-[40px] pr-[10px] text-[15px] leading-[30px] font-bold text-[#858687]">
      <div>صاحب کالا: علیرضا ولي زاده</div>
      <div class="text-[15.700px] [word-spacing:1px]">مانده حساب: بي حساب</div>
    </aside>
  </section>
  <div class="absolute left-[163px] top-[772px] w-px h-[166px] bg-white"></div>

  <!-- messages window -->
  <section dir="rtl" class="absolute left-[1623px] top-[207px] w-[498px] h-[798px] bg-white pl-[64px] pr-[66px] pt-[27px]">
    <h2 class="h-[52px] text-center text-[28px] leading-[40px] text-[#212529] [-webkit-text-stroke:.5px]"><span class="inline-block scale-x-[.85]">پیام ها</span></h2>
    <div class="flex flex-col gap-[10.500px] text-white text-[18px] leading-[31px] whitespace-nowrap [-webkit-text-stroke:.4px]">
      <article class="h-[100.500px] rounded-[4px] bg-[#6c757d] pr-[15px] pt-[21px]"><p class="origin-right scale-x-[.768]">خودرو جهت حمل بار شما اعزام گردید</p><p class="origin-right scale-x-[.726] text-[16px] leading-[24px]">۱۴۰۰/۰۶/۲۵</p></article>
      <article class="h-[100.500px] rounded-[4px] bg-[#6c757d] pr-[15px] pt-[21px]"><p class="origin-right scale-x-[.768]">خودرو جهت حمل بار شما اعزام گردید</p><p class="origin-right scale-x-[.726] text-[16px] leading-[24px]">۱۴۰۰/۰۶/۲۵</p></article>
      <article class="h-[132px] rounded-[4px] bg-[#6c757d] pr-[15px] pt-[21px]"><p class="origin-right scale-x-[.758]">خودرو ۹۹ع۹۹۹ یخچالدارخاور ۴ تا ۱۰ تن بار شما را بارگیري<br>نمود</p><p class="origin-right scale-x-[.726] text-[16px] leading-[24px]">۱۴۰۰/۰۶/۲۵</p></article>
      <article class="h-[101px] rounded-[4px] bg-[#6c757d] pr-[15px] pt-[21px]"><p class="origin-right scale-x-[.768]">بار شما توسط راننده تخلیه گردید</p><p class="origin-right scale-x-[.726] text-[16px] leading-[24px]">۱۴۰۰/۰۶/۲۵</p></article>
      <article class="h-[100.500px] rounded-[4px] bg-[#6c757d] pr-[15px] pt-[21px]"><p class="origin-right scale-x-[.754]">خودرو ۱۲ع۵۵۵ اطاقدار (خاور) بار شما را بارگیري نمود</p><p class="origin-right scale-x-[.726] text-[16px] leading-[24px]">۱۴۰۰/۰۶/۲۵</p></article>
      <article class="h-[99px] rounded-[4px] bg-[#6c757d] pr-[15px] pt-[21px]"><p class="origin-right scale-x-[.768]">بار شما توسط راننده تخلیه گردید</p><p class="origin-right scale-x-[.726] text-[16px] leading-[24px]">۱۴۰۰/۰۶/۲۵</p></article>
    </div>
  </section>
</main>
</body>
</html>
